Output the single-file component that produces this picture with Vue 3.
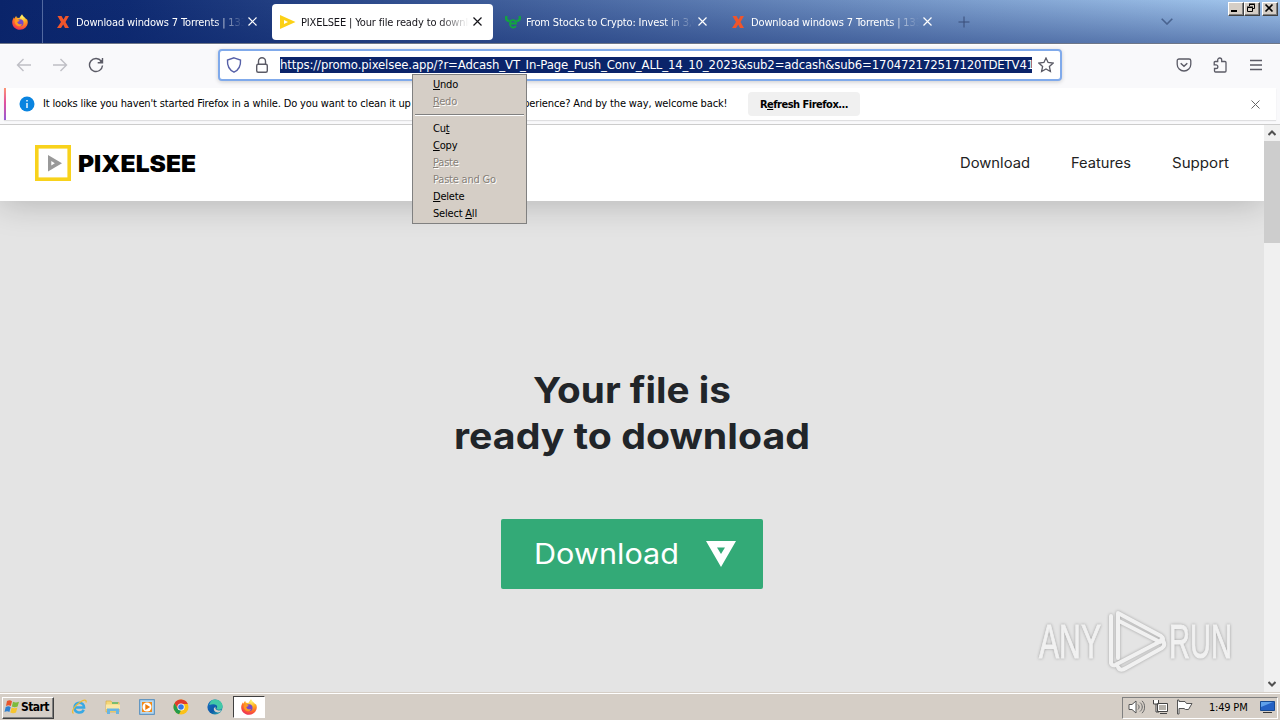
<template>
  <div class="screen">
    <svg class="defs" width="0" height="0">
      <defs>
        <radialGradient id="fox" cx=".65" cy=".15" r=".95">
          <stop offset="0" stop-color="#fff36b" />
          <stop offset=".35" stop-color="#ffb01f" />
          <stop offset=".65" stop-color="#ff6a2b" />
          <stop offset="1" stop-color="#e91f63" />
        </radialGradient>
        <linearGradient id="edge" x1="0" y1="0" x2="1" y2="1">
          <stop offset="0" stop-color="#1b6fc4" />
          <stop offset=".55" stop-color="#0d5aa7" />
          <stop offset="1" stop-color="#35c1b1" />
        </linearGradient>
        <symbol id="firefox" viewBox="0 0 16 16">
          <path fill="url(#fox)" d="M10 .2c.8 1 1 1.9 2.400 3 .9.600 1.500 1.300 1.800 2.200l.6-.7C15.500 6 15.900 7.300 15.800 8.600 15.500 12.800 12.200 15.800 8 15.800S.3 12.700.2 8.500C.2 6.500.9 4.700 2 3.200l.4 1.500C3 4 3.300 2.700 4.200 2l.7 1.700c1 0 1.500.1 2.300.5C8 3 8.800 1.400 10 .2z" />
          <circle cx="8" cy="8.700" r="3.500" fill="#7549c9" />
          <path fill="#ff9a22" d="M2.800 6.500c1.500-1 3.500-.8 5 .3-1 .9-2 .8-2.500 1.500.5 1.800 2.600 2.600 4.800 1.600C9.300 12.500 6.700 13 4.800 11.600 3.200 10.400 2.500 8.500 2.800 6.500z" />
        </symbol>
      </defs>
    </svg>

    <header class="tabbar">
      <div class="fox-view"><svg width="16" height="16"><use href="#firefox" /></svg></div>
      <div v-for="(tab, i) in tabs" :key="i" class="tab" :class="{ active: tab.active }">
        <svg class="favicon" width="16" height="16" viewBox="0 0 16 16">
          <path v-if="tab.icon === 'x'" fill="#f0552b" d="M2.500 2h4l2 3.500L10.500 2H14l-3.500 6 3.500 6h-4l-1.800-3.600L6 14H2l4-6z" />
          <path v-else-if="tab.icon === 'play'" fill="#fcd116" fill-rule="evenodd" d="M0 1l15.500 7L0 15zM4 6v4l4-2z" />
          <g v-else fill="none" stroke="#12a63f" stroke-width="2.400">
            <path d="M1.500 2c-1 3.500.5 5 3 5M14.500 2c1 3.500-.5 5-3 5" />
            <path d="M5 9.500h6C11 5 5 5 5 9.500s4 5 6 2.500" stroke-width="1.800" />
          </g>
        </svg>
        <span class="tab-title">{{ tab.title }}</span>
        <svg class="tab-close" width="9" height="9" viewBox="0 0 9 9"><path d="M.5.5l8 8M8.500.5l-8 8" /></svg>
      </div>
      <svg class="new-tab" width="12" height="12" viewBox="0 0 12 12"><path d="M6 .5v11M.5 6h11" /></svg>
      <svg class="all-tabs" width="12" height="7" viewBox="0 0 12 7"><path d="M.7.7L6 6 11.300.7" /></svg>
      <div class="win-buttons">
        <span class="win-btn"><svg width="12" height="10" viewBox="0 0 12 10"><path d="M2 8h6" stroke-width="2" /></svg></span>
        <span class="win-btn"><svg width="12" height="10" viewBox="0 0 12 10"><path d="M4.500 3V1.500h5v4H8M4 1h6M2.500 4.500h5v4h-5zM2 4h6" /></svg></span>
        <span class="win-btn last"><svg width="12" height="10" viewBox="0 0 12 10"><path d="M2.500 1.500l7 7M9.500 1.500l-7 7" stroke-width="1.700" /></svg></span>
      </div>
    </header>

    <div class="toolbar">
      <svg class="nav-icon off" width="16" height="16" viewBox="0 0 16 16"><path d="M15 8H1.500M7.500 2l-6 6 6 6" /></svg>
      <svg class="nav-icon off" width="16" height="16" viewBox="0 0 16 16"><path d="M1 8h13.500M8.500 2l6 6-6 6" /></svg>
      <svg class="nav-icon" width="16" height="16" viewBox="0 0 16 16"><path d="M13.300 4.200A6.500 6.500 0 1 0 14.500 8.500M14.500 1v4.800H9.700" /><path d="M14.500 2v3.800h-3.800z" class="solid" /></svg>
      <div class="urlbar">
        <svg class="shield" width="16" height="16" viewBox="0 0 16 16"><path d="M8 .8l6.500 2.200c.4 5.500-1.500 9.800-6.500 12.200C3 12.800 1.100 8.500 1.500 3z" /></svg>
        <svg class="lock" width="14" height="16" viewBox="0 0 14 16"><path d="M3.500 7V4.200a3.500 3.500 0 0 1 7 0V7" /><rect x="1.700" y="7.200" width="10.600" height="8" rx="1.500" /></svg>
        <span class="url">https://promo.pixelsee.app/?r=Adcash_VT_In-Page_Push_Conv_ALL_14_10_2023&amp;sub2=adcash&amp;sub6=170472172517120TDETV41</span>
        <svg class="star" width="16" height="16" viewBox="0 0 16 16"><path d="M8 1l2.100 4.500 5 .6-3.700 3.400 1 5L8 12l-4.400 2.500 1-5L.9 6.100l5-.6z" /></svg>
      </div>
      <div class="tools">
        <svg width="16" height="16" viewBox="0 0 16 16"><path d="M3 2h10a1.800 1.800 0 0 1 1.800 1.800V7.200a6.800 6.800 0 0 1-13.600 0V3.800A1.800 1.800 0 0 1 3 2z" /><path d="M4.700 6.300L8 9.300l3.300-3" stroke-width="1.500" /></svg>
        <svg width="16" height="16" viewBox="0 0 16 16"><path d="M5.700 4.500V3a2 2 0 0 1 4 0v1.500h3.300a1 1 0 0 1 1 1V14a1 1 0 0 1-1 1H3.500a1 1 0 0 1-1-1v-2.500H4a1.700 1.700 0 0 0 0-3.700H2.200V5.500a1 1 0 0 1 1-1z" /></svg>
        <svg width="16" height="16" viewBox="0 0 16 16"><path d="M2 3.500h12M2 8h12M2 12.500h12" /></svg>
      </div>
    </div>

    <div class="notice">
      <div class="notice-bar">
        <svg width="16" height="16" viewBox="0 0 16 16"><circle cx="8" cy="8" r="7.500" fill="#0a84e0" /><path d="M8 7v5M8 4v1.600" stroke="#fff" stroke-width="1.400" /></svg>
        <span class="notice-text">It looks like you haven't started Firefox in a while. Do you want to clean it up for a fresh, like-new experience? And by the way, welcome back!</span>
        <button class="refresh">R<u>e</u>fresh Firefox...</button>
        <svg class="notice-close" width="9" height="9" viewBox="0 0 9 9"><path d="M.5.5l8 8M8.500.5l-8 8" /></svg>
      </div>
    </div>

    <div class="viewport">
      <div class="page">
        <div class="site-header">
          <svg class="logo" width="36" height="36" viewBox="0 0 36 36">
            <rect x="1.800" y="1.800" width="32.400" height="32.400" fill="none" stroke="#f8d21c" stroke-width="3.600" />
            <path fill="#999" fill-rule="evenodd" d="M13 10l14 8.300L13 26.500zM16.300 16v4.500l3.500-2.200z" />
          </svg>
          <svg class="brand" width="118" height="24"><text x="0" y="20.500" textLength="118" lengthAdjust="spacingAndGlyphs">PIXELSEE</text></svg>
          <nav class="site-nav">
            <svg v-for="link in links" :key="link.text" :width="link.width" height="20">
              <text x="0" y="15" :textLength="link.width" lengthAdjust="spacingAndGlyphs">{{ link.text }}</text>
            </svg>
          </nav>
        </div>
        <main class="hero">
          <svg class="headline" width="356" height="98">
            <text x="79" y="38.500" textLength="198" lengthAdjust="spacingAndGlyphs">Your file is</text>
            <text x="0" y="84.500" textLength="356" lengthAdjust="spacingAndGlyphs">ready to download</text>
          </svg>
          <div class="download">
            <svg width="145" height="40"><text x="-1" y="30" textLength="145" lengthAdjust="spacingAndGlyphs">Download</text></svg>
            <svg width="30" height="26" viewBox="0 0 30 26"><path fill="#fff" fill-rule="evenodd" d="M0 0h30L15 26zM11 6.500l4 6.500 4-6.500z" /></svg>
          </div>
        </main>
      </div>
      <div class="scrollbar">
        <span class="arrow"><svg width="8" height="6" viewBox="0 0 8 6"><path d="M.5 5L4 1.500 7.500 5" /></svg></span>
        <span class="thumb"></span>
        <span class="arrow down"><svg width="8" height="6" viewBox="0 0 8 6"><path d="M.5 1L4 4.500 7.500 1" /></svg></span>
      </div>
      <svg class="watermark" width="200" height="66" viewBox="0 0 200 66">
        <g class="wm-text">
          <text x="3" y="50" textLength="62" lengthAdjust="spacingAndGlyphs">ANY</text>
          <text x="133" y="50" textLength="63" lengthAdjust="spacingAndGlyphs">RUN</text>
        </g>
        <g class="wm-logo">
          <path d="M82 50V5l43 23c4 3 1 7-3 5L83 13" />
          <path d="M75 8v47c1 3 4 3 6 1l44-23M82 59c2 4 5 3 8 1l36-20c4-3 2-7-1-8" />
        </g>
      </svg>
    </div>

    <footer class="taskbar">
      <div class="start">
        <svg width="16" height="16" viewBox="0 0 16 16">
          <path fill="#e8552b" d="M3 2c2-1 3.500-1 5 .3L6.800 7C5.300 6 3.700 6 2 7z" />
          <path fill="#7dbb3c" d="M9 2.700c2 1 3.700 1 6 0L13.600 7.500c-2 1-3.700 1-5.700 0z" />
          <path fill="#2f80d0" d="M1.700 8c2-1 3.500-1 5 .2L5.400 13C4 12 2.300 12 .5 13z" />
          <path fill="#f7c52e" d="M7.700 8.600c2 1 3.700 1 5.700 0L12 13.500c-2 1-3.700 1-5.700 0z" />
        </svg>
        <b>Start</b>
      </div>
      <div class="quick">
        <span class="launch">
          <svg width="16" height="16" viewBox="0 0 16 16"><path fill="none" stroke="#38a9e4" stroke-width="2.500" d="M3.500 8.500h9.600c0-6.500-9.600-6.500-9.600 0 0 6 7.500 6.500 9.200 2.300" /><path fill="none" stroke="#eebc35" stroke-width="1.300" d="M2.500 14.500C-.5 13 4 6.500 9 3.200 12.500 1 15.800 0 15 3.500" /></svg>
        </span>
        <span class="launch">
          <svg width="16" height="16" viewBox="0 0 16 16"><path fill="#f5d778" stroke="#d7ad49" stroke-width=".7" d="M1 2h5l1 1.500h7V13H1z" /><path fill="#79bd70" d="M7 3h6v2H7z" /><path fill="#fbe8a6" d="M1 5.500h14V10H1z" /><path fill="#69b5e2" d="M2 15V9.500h12V15h-3v-3H5v3z" /></svg>
        </span>
        <span class="launch">
          <svg width="16" height="16" viewBox="0 0 16 16"><rect x=".7" y=".7" width="14.600" height="14.600" fill="#b8d9ef" stroke="#4b89bd" /><path fill="#f38a17" d="M3 3h10v10H3z" /><circle cx="8" cy="8" r="4.500" fill="#fff" /><path fill="#ee7b0b" d="M6.300 4.900L11.200 8l-4.900 3.100z" /></svg>
        </span>
        <span class="launch">
          <svg width="16" height="16" viewBox="0 0 16 16"><circle cx="8" cy="8" r="7.500" fill="#fbc116" /><path fill="#df3b2d" d="M1.500 4.200a7.500 7.500 0 0 1 13.300.8H8L4.700 9.500z" /><path fill="#249b4b" d="M1.500 4.200l3.600 6L8 11.600 6 15.200A7.500 7.500 0 0 1 1.500 4.200z" /><circle cx="8" cy="8" r="3.600" fill="#fff" /><circle cx="8" cy="8" r="2.800" fill="#3478e5" /></svg>
        </span>
        <span class="launch">
          <svg width="16" height="16" viewBox="0 0 16 16"><circle cx="8" cy="8" r="7.600" fill="url(#edge)" /><path fill="#42c9a7" d="M4 1.700c5-3.200 12 .3 11.600 6.100-.3 3-4.400 3.500-6.300 2.200C12 6 8 4 2 6z" /><path fill="#d5cec6" d="M9 7.500c-2 2 1 5 5.300 3.700L13 13c-3.500 1.500-7-1-6-4z" /></svg>
        </span>
        <span class="launch running"><svg width="16" height="16"><use href="#firefox" /></svg></span>
      </div>
      <div class="tray">
        <svg width="17" height="16" viewBox="0 0 17 16"><path fill="#fff" stroke="#555" d="M1 5.500h3L8 2v12l-4-3.500H1z" /><path fill="none" stroke="#666" d="M10 5.500c1.500 1.500 1.500 3.500 0 5M12 3.500c3 2.500 3 6.500 0 9M14 1.800c3.500 3.500 3.500 9 0 12.400" /></svg>
        <svg width="17" height="16" viewBox="0 0 17 16"><path fill="#fff" stroke="#444" d="M5.500 4.500h10v8h-10zM8 14.500h7M1.500 1v4h5V1M4 5v8h3" /><path fill="#b5b1aa" d="M7 6h7v5H7z" /></svg>
        <svg width="17" height="16" viewBox="0 0 17 16"><path fill="#fff" stroke="#555" d="M1.500 1v14h1.500V9.500h5l1.500 1h3l3.500-6h-5.500L9 2.500H3V1z" /></svg>
        <span class="clock">1:49 PM</span>
        <svg class="monitor" width="15" height="14" viewBox="0 0 15 14"><path fill="#2461c4" stroke="#174a91" d="M.5 1.500h14v9H.5z" /><path fill="#5fa0ea" d="M1 2h12L1 7z" /><path fill="#333" d="M3 12h9v1H3z" /></svg>
      </div>
    </footer>

    <ul class="menu">
      <template v-for="(item, i) in menu" :key="i">
        <li v-if="item.sep" class="sep"></li>
        <li v-else :class="{ disabled: item.off }">{{ item.pre }}<u>{{ item.key }}</u>{{ item.post }}</li>
      </template>
    </ul>
  </div>
</template>

<script setup>
const tabs = [
  { title: 'Download windows 7 Torrents | 1337x', icon: 'x' },
  { title: 'PIXELSEE | Your file ready to download', icon: 'play', active: true },
  { title: 'From Stocks to Crypto: Invest in 3,000', icon: 'etoro' },
  { title: 'Download windows 7 Torrents | 1337x', icon: 'x' },
]

const links = [
  { text: 'Download', width: 70 },
  { text: 'Features', width: 60 },
  { text: 'Support', width: 57 },
]

const menu = [
  { key: 'U', post: 'ndo' },
  { key: 'R', post: 'edo', off: true },
  { sep: true },
  { pre: 'Cu', key: 't' },
  { key: 'C', post: 'opy' },
  { key: 'P', post: 'aste', off: true },
  { pre: 'Paste and Go', off: true },
  { key: 'D', post: 'elete' },
  { pre: 'Select ', key: 'A', post: 'll' },
]
</script>

<style>
body { margin: 0; overflow: hidden; }
</style>

<style scoped>
.screen {
  position: relative;
  width: 1280px;
  height: 720px;
  display: flex;
  flex-direction: column;
  overflow: hidden;
  font-family: Tahoma, "DejaVu Sans Condensed", "DejaVu Sans", sans-serif;
  font-stretch: condensed;
  font-size: 11px;
  color: #000;
}
.screen svg { flex: none; display: block; }
.screen .defs { position: absolute; }

.tabbar {
  height: 43px;
  flex: none;
  display: flex;
  align-items: center;
  border-bottom: 1px solid #6f7788;
  background:
    linear-gradient(to bottom, rgba(10,36,106,0) 0, rgba(10,36,106,.42) 100%),
    linear-gradient(97deg, #0a246a 0, #0f2b72 10%, #a6caf0 100%);
}
.fox-view { width: 43px; height: 43px; box-sizing: border-box; border-right: 1px solid #5269a0; display: flex; align-items: center; padding-left: 12px; margin-right: 2px; }
.tab { width: 221px; height: 36px; margin: 0 2px; box-sizing: border-box; padding: 0 11px 0 8px; display: flex; align-items: center; border-radius: 4px; color: #fff; flex: none; }
.tab.active { background: #fff; color: #15141a; }
.tab-title { margin-left: 5px; padding-top: 2px; width: 168px; overflow: hidden; white-space: nowrap; letter-spacing: -0.14px; mask-image: linear-gradient(to left, transparent 0, #000 30px); }
.tab-close { margin-left: 4px; stroke: #fff; fill: none; stroke-width: 1.2; }
.tab.active .tab-close { stroke: #15141a; }
.new-tab { margin-left: 13px; stroke: #384d78; }
.all-tabs { margin-left: 191px; stroke: #49638f; stroke-width: 1.6; fill: none; }
.win-buttons { margin-left: auto; align-self: flex-start; padding: 2px 2px 0 0; display: flex; }
.win-btn { width: 16px; height: 14px; box-sizing: border-box; background: #d5cec6; border: 1px solid; border-color: #fff #404040 #404040 #fff; box-shadow: inset -1px -1px #808080; }
.win-btn.last { margin-left: 2px; }
.win-btn svg { stroke: #000; fill: none; }

.toolbar { height: 44px; flex: none; display: flex; align-items: center; background: #f9f9fb; box-sizing: border-box; padding: 0 16px 3px; box-shadow: inset 0 1px #fff; }
.nav-icon { fill: none; stroke: #5b5b66; stroke-width: 1.4; margin-right: 20px; }
.nav-icon.off { stroke: #bfbfc5; }
.nav-icon .solid { fill: #5b5b66; stroke: none; }
.urlbar { width: 844px; height: 32px; box-sizing: border-box; border: 2px solid #80aaeb; border-radius: 4px; margin-left: 94px; background: #fff; display: flex; align-items: center; padding-left: 6px; box-shadow: 0 1px 4px rgba(0,0,0,.18); }
.urlbar svg { fill: none; stroke: #5b5b66; stroke-width: 1.4; }
.urlbar .shield { stroke: #5660a8; }
.urlbar .lock { margin-left: 13px; }
.url { width: 752px; height: 16px; margin-left: 11px; background: #0a246a; color: #fff; font-size: 13px; line-height: 16px; letter-spacing: -0.13px; overflow: hidden; white-space: nowrap; }
.urlbar .star { margin-left: 6px; stroke-width: 1.3; }
.tools { margin-left: auto; display: flex; gap: 20px; }
.tools svg { fill: none; stroke: #5b5b66; stroke-width: 1.3; }

.notice { height: 37px; flex: none; background: #f9f9fb; border-bottom: 1px solid #ccc; box-sizing: border-box; padding: 0 4px; }
.notice-bar { height: 32px; background: #fff; border-left: 2px solid; border-image: linear-gradient(#ff9a70, #e2519e 45%, #9059d8) 1; display: flex; align-items: center; padding-left: 13px; box-shadow: 0 1px 1px rgba(0,0,0,.1); }
.notice-text { margin-left: 8px; padding-bottom: 1px; width: 685px; white-space: nowrap; letter-spacing: -0.143px; }
.refresh { margin-left: 20px; width: 112px; height: 24px; padding: 0; background: #f0f0f0; border: 0; border-radius: 4px; font: bold 11px "DejaVu Sans Condensed", sans-serif; font-stretch: condensed; letter-spacing: -0.5px; }
.notice-close { margin-left: auto; margin-right: 16px; fill: none; stroke: #666; }

.viewport { height: 567px; flex: none; display: flex; position: relative; }
.page { width: 1264px; background: #e4e4e4; }
.site-header { height: 76px; box-sizing: border-box; padding: 0 35px; display: flex; align-items: center; background: #fff; box-shadow: 0 2px 34px rgba(0,0,0,.22); clip-path: inset(0 0 -60px 0); position: relative; }
.brand { margin-left: 7px; font-family: Inter, sans-serif; font-size: 23px; font-weight: 900; }
.site-nav { margin-left: auto; display: flex; gap: 41px; font-family: Inter, sans-serif; font-size: 14px; fill: #222; }
.hero { display: flex; flex-direction: column; align-items: center; padding-top: 163px; }
.headline { font-family: Inter, sans-serif; font-weight: 700; font-size: 36px; fill: #212529; }
.download { width: 262px; height: 70px; margin-top: 57px; box-sizing: border-box; padding: 0 27px 0 34px; display: flex; align-items: center; justify-content: space-between; background: #33aa77; border-radius: 2px; font-family: Inter, sans-serif; font-size: 28px; fill: #fff; }
.scrollbar { width: 16px; background: #f0f0f0; display: flex; flex-direction: column; }
.arrow { height: 16px; display: flex; align-items: center; justify-content: center; }
.arrow.down { margin-top: auto; }
.arrow svg { fill: none; stroke: #505050; stroke-width: 2; }
.thumb { height: 102px; background: #cdcdcd; }

.watermark { position: absolute; left: 1036px; top: 483px; filter: drop-shadow(0 0 1.500px rgba(0,0,0,.3)); }
.wm-text { font-family: "Liberation Sans", sans-serif; font-size: 49px; fill: #f1f1f1; stroke: #f1f1f1; stroke-width: 1; }
.wm-logo { fill: none; stroke: #f1f1f1; stroke-width: 4; stroke-linejoin: round; stroke-linecap: round; }

.taskbar { height: 28px; flex: none; background: #d5cec6; box-sizing: border-box; border-top: 1px solid #d5cec6; box-shadow: inset 0 1px #fff; display: flex; align-items: center; padding: 2px 2px 0; }
.start { width: 52px; height: 22px; box-sizing: border-box; border: 1px solid; border-color: #fff #404040 #404040 #fff; box-shadow: inset -1px -1px #808080; display: flex; align-items: center; padding: 0 0 2px 1px; }
.start b { margin-left: 1px; font-size: 12px; letter-spacing: -0.6px; }
.quick { display: flex; align-items: center; margin-left: 9px; gap: 2px; padding-bottom: 1px; }
.launch { width: 32px; height: 22px; box-sizing: border-box; display: flex; align-items: center; justify-content: center; }
.launch.running { background: #fff; border: 1px solid; border-color: #404040 #fff #fff #404040; }
.tray { margin-left: auto; width: 156px; height: 22px; box-sizing: border-box; border: 1px solid; border-color: #808080 #fff #fff #808080; display: flex; align-items: center; padding: 0 2px 1px 5px; gap: 7px; }
.clock { margin-left: 9px; width: 40px; white-space: nowrap; letter-spacing: -0.2px; }
.monitor { margin-left: auto; }

.menu { position: absolute; left: 412px; top: 74px; width: 115px; height: 150px; margin: 0; padding: 1px 2px; box-sizing: border-box; list-style: none; background: #d5cec6; border: 1px solid #808080; }
.menu li { height: 17px; line-height: 17px; padding-left: 18px; letter-spacing: -0.2px; }
.menu li.disabled { color: #868078; text-shadow: 1px 1px #fff; }
.menu li.sep { height: 1px; margin: 4px 0 4px; border-top: 1px solid #808080; background: #fff; }
</style>
